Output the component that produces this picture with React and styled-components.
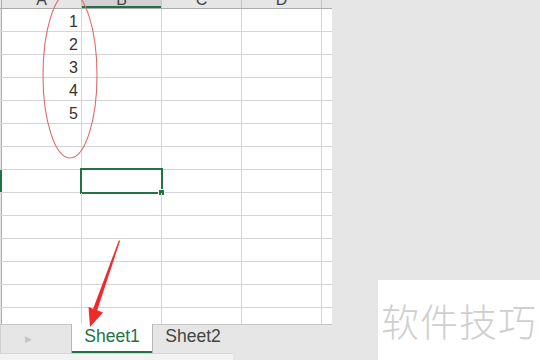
import React from 'react';
import styled, { createGlobalStyle } from 'styled-components';

const GlobalStyle = createGlobalStyle`
  html, body {
    margin: 0;
    padding: 0;
    background: #e6e6e6;
  }
  body {
    width: 540px;
    height: 360px;
    overflow: hidden;
    font-family: "Liberation Sans", Arial, sans-serif;
  }
`;

const Screen = styled.div`
  position: relative;
  width: 540px;
  height: 360px;
  display: flex;
  overflow: hidden;
  background: #e6e6e6;
`;

const Workbook = styled.div`
  width: 332px;
  display: flex;
  flex-direction: column;
`;

const Sheet = styled.div`
  height: 325px;
  overflow: hidden;
  background: #fff;
`;

const Row = styled.div`
  display: flex;
  height: ${p => (p.header ? 8 : 22)}px;
  border-bottom: 1px solid ${p => (p.header ? '#ababab' : '#d4d4d4')};
`;

const RowStub = styled.div`
  width: 1px;
  flex: none;
  background: ${p => (p.active ? '#217346' : '#e6e6e6')};
  border-right: 1px solid ${p => (p.active ? '#217346' : '#ababab')};
`;

const HeadCell = styled.div`
  width: ${p => p.w}px;
  flex: none;
  overflow: hidden;
  background: ${p => (p.active ? '#d2d2d2' : '#e6e6e6')};
  border-right: 1px solid ${p => (p.last ? 'transparent' : '#c4c4c4')};
  box-shadow: ${p => (p.active ? 'inset 0 -2px 0 #217346' : 'none')};
  text-align: center;
  color: #444;
  font-size: 16px;

  span {
    display: block;
    margin-top: -10px;
    line-height: 20px;
  }
`;

const Cell = styled.div`
  position: relative;
  width: ${p => p.w}px;
  flex: none;
  border-right: 1px solid ${p => (p.last ? 'transparent' : '#d4d4d4')};
  text-align: right;
  padding-right: 3px;
  box-sizing: content-box;
  font-size: 16px;
  line-height: 25px;
  color: #333;
`;

const Selection = styled.div`
  position: absolute;
  left: -2px;
  top: -2px;
  right: -2px;
  bottom: -2px;
  border: 2px solid #217346;
  pointer-events: none;

  &::after {
    content: '';
    position: absolute;
    right: -4px;
    bottom: -4px;
    width: 5px;
    height: 5px;
    background: #217346;
    border: 1px solid #fff;
  }
`;

const TabBar = styled.div`
  height: 28px;
  display: flex;
  align-items: stretch;
  border-top: 1px solid #c6c6c6;
`;

const NavArea = styled.div`
  width: 71px;
  display: flex;
  align-items: center;
  padding-left: 24px;
  box-sizing: border-box;
  border-left: 1px solid #d0d0d0;
  color: #c4c4c4;
  font-size: 9px;
`;

const Tab = styled.div`
  width: ${p => (p.active ? 82 : 80)}px;
  display: flex;
  align-items: center;
  justify-content: center;
  margin-top: -1px;
  font-family: "Liberation Sans", Arial, sans-serif;
  font-size: 17.5px;
  color: ${p => (p.active ? '#217346' : '#444')};
  background: ${p => (p.active ? '#fff' : 'transparent')};
  border-left: 1px solid ${p => (p.active ? '#b8b8b8' : 'transparent')};
  border-right: 1px solid ${p => (p.active ? '#b8b8b8' : 'transparent')};
  box-shadow: ${p => (p.active ? 'inset 0 -2px 0 #217346' : 'none')};
  padding-bottom: 4px;
  box-sizing: border-box;
`;

const ScrollTrack = styled.div`
  height: 6px;
  width: 233px;
  background: #f3f3f3;
  border-top: 1px solid #d6d6d6;
`;

const Annotations = styled.svg`
  position: absolute;
  left: 0;
  top: 0;
  pointer-events: none;
`;

const Watermark = styled.div`
  position: absolute;
  left: 378px;
  top: 280px;
  width: 162px;
  height: 80px;
  background: #fff;
  display: flex;
  align-items: center;
  justify-content: center;
  padding-bottom: 2px;
  box-sizing: border-box;
  font-family: "Noto Sans CJK SC", sans-serif;
  font-weight: 300;
  font-size: 38px;
  letter-spacing: 1px;
  color: #cfcfcf;
`;

const columns = [
  { key: 'A', w: 79 },
  { key: 'B', w: 79 },
  { key: 'C', w: 79 },
  { key: 'D', w: 79 },
  { key: 'E', w: 10, last: true },
];

const values = ['1', '2', '3', '4', '5'];
const ROWS = 14;
const SELECTED_ROW = 7;

export default function App() {
  return (
    <Screen>
      <GlobalStyle />
      <Workbook>
        <Sheet>
          <Row header>
            <RowStub />
            {columns.map(c => (
              <HeadCell key={c.key} w={c.w} last={c.last} active={c.key === 'B'}>
                <span>{c.last ? '' : c.key}</span>
              </HeadCell>
            ))}
          </Row>
          {Array.from({ length: ROWS }).map((_, r) => (
            <Row key={r}>
              <RowStub active={r === SELECTED_ROW} />
              {columns.map(c => (
                <Cell key={c.key} w={c.w - 3} last={c.last}>
                  {c.key === 'A' ? values[r] || '' : ''}
                  {c.key === 'B' && r === SELECTED_ROW && <Selection />}
                </Cell>
              ))}
            </Row>
          ))}
        </Sheet>
        <TabBar>
          <NavArea>▶</NavArea>
          <Tab active>Sheet1</Tab>
          <Tab>Sheet2</Tab>
        </TabBar>
        <ScrollTrack />
      </Workbook>

      <Annotations width="540" height="360" viewBox="0 0 540 360">
        <ellipse cx="70" cy="75" rx="27" ry="83" fill="none" stroke="#e06a6a" strokeWidth="1.1" />
        <polygon points="119,240 120,241 97,311 93,309" fill="#f02a2a" />
        <polygon points="90,327 88.5,307 103,312.5" fill="#f02a2a" />
      </Annotations>

      <Watermark>软件技巧</Watermark>
    </Screen>
  );
}
